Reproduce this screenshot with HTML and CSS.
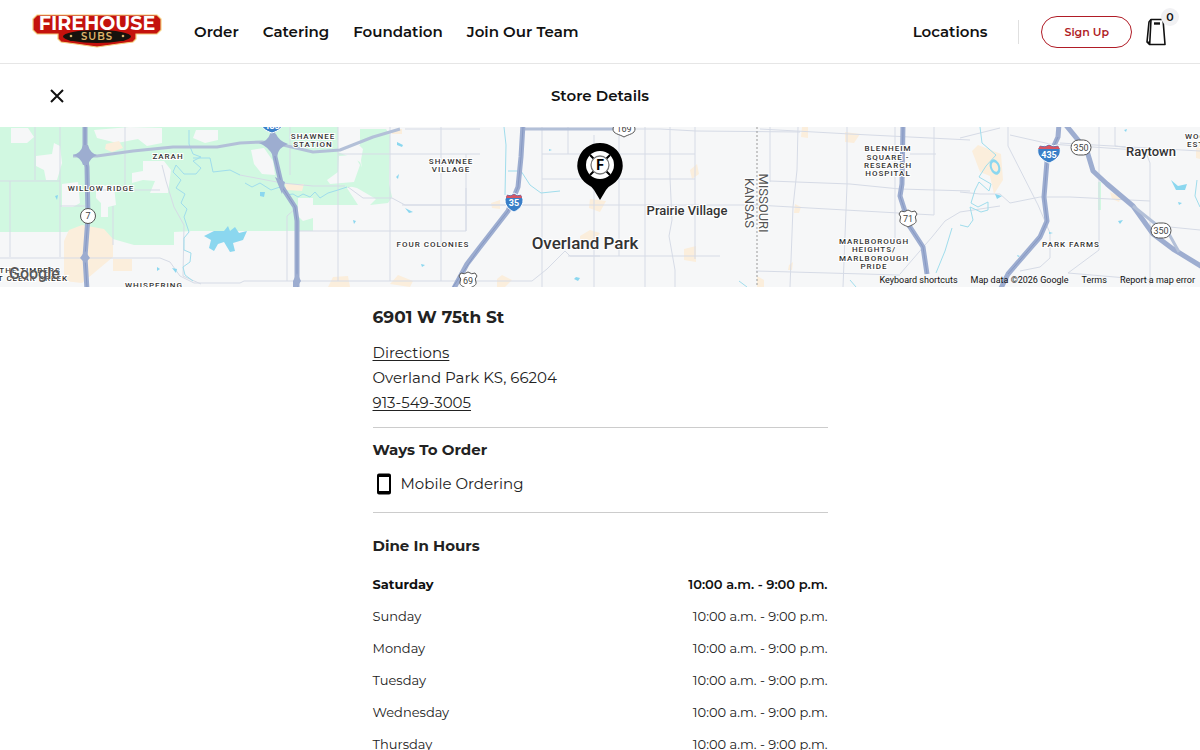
FILE: index.html
```html
<!DOCTYPE html>
<html lang="en">
<head>
<meta charset="utf-8">
<meta name="viewport" content="width=device-width, initial-scale=1">
<title>Store Details | Firehouse Subs</title>
<link rel="stylesheet" href="styles.css">
</head>
<body>
<header class="site-header">
  <a class="logo" href="#" aria-label="Firehouse Subs">
    <svg viewBox="0 0 130 36" width="130" height="36" role="img" aria-hidden="true">
      <path d="M5 1H125L129 5V16L125 20H104V25L101 28L86 30L65 33L44 30L29 28L26 25V20H5L1 16V5Z" fill="#c4120d" stroke="#f3cc7d" stroke-width="1.2"/>
      <ellipse cx="65" cy="22.5" rx="34" ry="6.5" fill="#17120d"/>
      <text class="logo-main" x="65" y="16" text-anchor="middle">FIREHOUSE</text>
      <text class="logo-sub" x="65" y="26" text-anchor="middle">SUBS</text>
      <circle cx="39" cy="22" r="1.3" fill="#e0b66c"/><circle cx="91" cy="22" r="1.3" fill="#e0b66c"/>
    </svg>
  </a>
  <nav class="main-nav" aria-label="Main">
    <a href="#">Order</a><a href="#">Catering</a><a href="#">Foundation</a><a href="#">Join Our Team</a>
  </nav>
  <div class="account">
    <a class="locations" href="#">Locations</a>
    <span class="divider"></span>
    <button class="sign-up" type="button">Sign Up</button>
    <button class="bag" type="button" aria-label="Bag, 0 items">
      <svg viewBox="0 0 20 28" width="20" height="28" fill="none" stroke="#111" stroke-width="1.6" stroke-linejoin="round" aria-hidden="true">
        <path d="M5 1.5H17L19 26.5H3.5L1 24L3 4Z"/><path d="M5 1.5L3.7 26.5M1.2 24L3.7 24.5"/><path d="M8 5.5H14" stroke-width="2.4"/>
      </svg>
      <span class="count">0</span>
    </button>
  </div>
</header>
<main>
  <div class="title-bar">
    <button class="close" type="button" aria-label="Close">
      <svg viewBox="0 0 14 14" width="14" height="14" fill="none" stroke="#111" stroke-width="2" aria-hidden="true"><path d="M1 1L13 13M13 1L1 13"/></svg>
    </button>
    <h1>Store Details</h1>
  </div>
  <section class="map" aria-label="Map">
    <svg class="map-art" viewBox="0 127 1200 160" preserveAspectRatio="xMidYMid slice">
      <rect y="127" width="1200" height="160" fill="#f6f7f8"/>
      <g fill="#d1f8e1">
        <path d="M0 127H338V152L350 157L360 162L363 170L353 186L347 188L358 205H313V231H192L174 232V245H134L113 239L90 228L66 232H0Z"/>
        <path d="M357 129H386L390 135L389 184L392 197L388 203L370 205L376 199L357 188L340 184L354 182L362 170L361 160L363 149L356 142Z"/>
        <path d="M1098 182h3v28h-3z"/>
      </g>
      <g fill="#f6f7f8">
        <path d="M11 128H28L34 137L27 143H11ZM36 156L52 154L54 143L60 146L62 163L57 180H46L44 170L36 166ZM94 130L130 127L162 128V143L147 146L138 139L117 143L97 138ZM196 130H218V140L205 143L193 138ZM143 161H164L171 170L168 193H150L155 181L143 180L132 183L132 173L143 171ZM62 184L78 182L80 203L73 207H62ZM96 185L114 186L116 205L108 207V217H101V203L96 198ZM251 150L264 148L273 161L275 175L262 174L254 164ZM298 198H313V218L303 221L298 216ZM338 127H360V145L338 150ZM339 156L354 155L360 165L354 182L330 184L327 180L338 172Z"/>
      </g>
      <g fill="#fbeedc">
        <path d="M64 257V241L69 230L82 225L104 229L113 239V257L82 283L64 281ZM106 144L119 141L123 148L112 152L105 149ZM113 259H132V271H113ZM285 184L304 184L302 191L286 190ZM328 287L333 277L348 276L350 287ZM390 284L398 275L413 281L410 287ZM491 203L500 200L500 209L492 208ZM590 199L606 201L600 212L589 208ZM580 236L590 230L600 233L594 240L580 240ZM497 279L502 275L512 280L505 287H497ZM690 170L697 164L699 174L692 179ZM684 249L696 246V262L684 260ZM802 127H808L808 138L801 137ZM845 132L860 134L854 143L845 142ZM795 204L801 207L799 213H794ZM789 265L793 262L792 270H788ZM757 276L764 280V287H757ZM972 151L978 145L1001 154L1003 180L994 194L990 176L980 172ZM1110 192L1121 197L1119 202L1112 199ZM1196 148L1200 145V159L1196 158ZM392 130L402 129L402 134L392 134Z"/>
      </g>
      <g class="minor">
        <path d="M10 181V257M0 181H60M35 127V180M60 127V257M60 206H85M0 258H85M88 157V190H160M113 206V245M125 127V190M162 165L166 181L174 207L184 225L183 276L201 284M85 258H160L170 262L180 276L194 283H240L244 281H480"/>
        <path d="M240 175L282 183L313 186H345M290 127V175M338 127V281M390 127V281M441 127V281M466 154V231M297 231H466V188M297 231V207L287 216V281M338 154H480M405 129H480M402 205H540M348 187L363 198H392L405 205H480"/>
        <path d="M525 129H660L696 131L800 132M542 154H695M542 179H695M542 127V287M568 127V154M594 135V287M619 127V256M645 127V287M670 127V178L672 220L669 236L675 270V287M695 127V259M480 205H756M568 256H720M600 256H570L565 251L547 269L532 281H480"/>
        <path d="M760 129L850 134L970 140M770 127V182M798 127L797 170L793 207L790 287M847 127V185L843 287M770 181L850 184L900 189L970 191M756 205L934 215V127M756 271L900 275M895 127V240M910 154H936M960 192L980 194H1000L1010 203L1040 197L1070 197L1150 201M960 138L1000 128M1008 127V146L1038 205L1050 233V258L1040 267L1020 271M1010 135L1050 144L1150 151L1170 153M1060 143L1200 151M1099 127V250L1068 273L1150 280M1115 127V146L1145 150L1150 163V285M1160 226L1200 230M900 274L932 237L945 221L960 212L1000 206"/>
      </g>
      <g class="water">
        <path d="M189 130V144L193 154L201 157L193 161L201 168L196 174H184L176 165L173 172L181 180L176 188L185 194L181 203L187 209L184 217L189 232L184 238V250L191 253L190 262L183 267L185 275L193 281"/>
        <path d="M193 158H210L213 172L230 170L240 175"/>
        <path d="M245 183L252 187L260 183L271 190L280 187L285 195L293 194L298 197L303 194L310 197L315 192L320 198L328 193L338 190L347 187"/>
        <path d="M504 127L506 145L505 195M508 171L521 171L530 185L541 193L560 191"/>
        <path d="M980 127L982 143L996 155L986 166L979 177L991 184L989 191L979 182L975 190L971 203L978 207L988 202L988 210L981 212L970 207L973 220L968 227L960 225M1197 180L1195 196L1200 207M952 228L945 251L936 273M739 281L747 287M850 280L856 287"/>
      </g>
      <g fill="#8bd7ef">
        <path d="M204 236L214 231L224 231L228 226L230 231L235 227L239 233L247 231L243 240L233 243L235 251L230 252L224 242L218 244L214 251L209 248L211 240ZM172 268l5 1-1 4ZM157 267l3 2-3 2ZM55 196l3-1-1 5ZM260 192l5 0-1 5-4-1ZM397 142l6 3-1 2-5-2ZM396 177l3-3-1 5ZM405 208l8 4-4 1ZM353 220l3 1-2 3ZM421 264l4 1-3 2ZM549 149l3 1-3 1ZM576 277l4 1-2 3-4-2ZM1171 180L1178 186L1187 184L1185 190H1176ZM1178 202l4 1-3 2ZM1118 221l5-1-3 4ZM1049 232l4 1-4 1ZM1124 130l3-1-1 3ZM1017 255l3 1-2 1Z"/>
        <ellipse cx="995" cy="167" rx="5" ry="8" transform="rotate(-20 995 167)"/>
        <path d="M995 194l7 2-5 3Z"/>
        <ellipse cx="995" cy="167" rx="3" ry="5" transform="rotate(-20 995 167)" fill="#fbeedc"/>
      </g>
      <g class="road">
        <path d="M73 156H97L133 151L173 147H217L240 143L262 142L283 145L313 152L340 150L373 137L400 129" class="mid"/>
        <path d="M523 129H623" class="mid"/>
        <path d="M85 124V156L87 167L88 217L85 257L87 290"/>
        <path d="M272 124L275 157L282 187L295 207L297 221V290"/>
        <path d="M523 124L521 157L518 187L508 211L480 247L467 264L453 290"/>
        <path d="M903 124L902 184L900 196L910 227L923 247L927 274"/>
        <path d="M1059 124L1058 137L1047 161L1044 197L1047 221L1040 237L1008 274L1000 290"/>
        <path d="M1065 124L1087 151L1093 171L1107 184L1133 206L1153 234L1173 249L1204 268"/>
        <path d="M1133 206L1158 226L1169 234L1179 252" class="mid"/>
      </g>
      <g class="road-line">
        <path d="M85 127V156L87 167L88 217L85 257L87 287M272 127L275 157L282 187L295 207L297 221V287M523 127L521 157L518 187L508 211L480 247L453 287M903 127L902 184L900 196L910 227L923 247L927 274M1058 137L1047 161L1044 197L1047 221L1040 237L1008 274"/>
      </g>
      <g fill="#9dadd0">
        <path d="M73 155Q81 153 83 145H88Q90 153 97 155Q90 158 88 165H83Q81 158 73 155ZM259 143Q268 141 270 134H276Q279 141 288 144Q279 147 277 156H273Q269 147 259 143ZM275 177L285 182L282 194ZM85 251L90 258L85 263L80 258ZM297 273L301 281L297 287H293V281ZM616 127H632L624 135Z"/>
      </g>
      <path d="M757 127V287" stroke="#999" stroke-width="1" stroke-dasharray="2 2"/>
      <g class="labels" text-anchor="middle">
        <text x="168" y="159">ZARAH</text><text x="101" y="191">WILLOW RIDGE</text>
        <text x="313" y="139">SHAWNEE</text><text x="313" y="147">STATION</text>
        <text x="451" y="164">SHAWNEE</text><text x="451" y="172">VILLAGE</text>
        <text x="433" y="247">FOUR COLONIES</text><text x="154" y="288">WHISPERING</text>
        <text x="30" y="273">THE TIMBERS</text><text x="30" y="281">AT CLEAR CREEK</text>
        <text x="888" y="151">BLENHEIM</text><text x="888" y="160">SQUARE -</text><text x="888" y="168">RESEARCH</text><text x="888" y="176">HOSPITAL</text>
        <text x="874" y="244">MARLBOROUGH</text><text x="874" y="252">HEIGHTS/</text><text x="874" y="261">MARLBOROUGH</text><text x="874" y="269">PRIDE</text>
        <text x="1071" y="247">PARK FARMS</text>
      </g>
      <g class="labels"><text x="1185" y="139">WOODS</text><text x="1187" y="147">ESTATES</text></g>
      <g class="places" text-anchor="middle">
        <text class="city" x="585" y="249">Overland Park</text>
        <text x="687" y="215">Prairie Village</text><text x="1151" y="156">Raytown</text>
        <text class="state" transform="translate(759 203) rotate(90)">MISSOURI</text>
        <text class="state" transform="translate(745 203) rotate(90)">KANSAS</text>
      </g>
      <g class="shields" text-anchor="middle">
        <circle cx="88" cy="216" r="7.5"/><text x="88" y="219">7</text>
        <rect x="1071" y="140" width="20" height="15" rx="7.5"/><text x="1081" y="151">350</text>
        <rect x="1151" y="223" width="20" height="15" rx="7.5"/><text x="1161" y="234">350</text>
        <path d="M901 211Q904 213 908 210Q912 213 915 211L917 214Q914 217 916 220C917 224 911 225 908 227C905 225 899 224 900 220Q902 217 899 214Z"/><text x="908" y="222">71</text>
        <path d="M461 273Q464 275 468 272Q472 275 475 273L477 276Q474 279 476 282C477 286 471 287 468 289C465 287 459 286 460 282Q462 279 459 276Z"/><text x="468" y="284">69</text>
        <path d="M614 124H634L635 129C635 134 629 134 624 137C619 134 613 134 613 129Z"/><text x="624" y="132">169</text>
      </g>
      <g class="interstate" text-anchor="middle">
        <path fill="#3a7fc8" stroke="#fff" d="M507 194Q511 196 514 193Q517 196 521 194C526 202 521 209 514 212C507 209 502 202 507 194Z"/><path fill="#d65563" d="M507 195Q511 197 514 194Q517 197 521 195L522 198H506Z"/><text x="514" y="206">35</text>
        <path fill="#3a7fc8" stroke="#fff" d="M1040 145Q1045 147 1049 144Q1053 147 1058 145C1064 153 1057 160 1049 163C1041 160 1034 153 1040 145Z"/><path fill="#d65563" d="M1040 146Q1045 148 1049 145Q1053 148 1058 146L1060 149H1038Z"/><text x="1049" y="158">435</text>
        <path fill="#3a7fc8" stroke="#fff" d="M261 120H283C284 128 278 131 272 133C266 131 260 128 261 120Z"/><text x="272" y="129">435</text>
      </g>
      <g>
        <path d="M600 143A22.5 22.5 0 0 0 587 184Q591 186 594 190L600 200L606 190Q609 186 613 184A22.5 22.5 0 0 0 600 143Z" fill="#000"/>
        <circle cx="600" cy="165" r="14" fill="#fff"/>
        <path d="M590 155L610 175M610 155L590 175" stroke="#000" stroke-width="2"/>
        <circle cx="600" cy="165" r="9" fill="#fff" stroke="#777" stroke-width="1.3"/>
        <text class="pin-letter" x="600" y="170" text-anchor="middle">F</text>
      </g>
    </svg>
    <a class="google" href="#">Google</a>
    <div class="attribution">
      <button type="button">Keyboard shortcuts</button><span>Map data ©2026 Google</span><a href="#">Terms</a><a href="#">Report a map error</a>
    </div>
  </section>
  <article class="store">
    <section class="address">
      <h2>6901 W 75th St</h2>
      <p><a href="#">Directions</a></p>
      <p>Overland Park KS, 66204</p>
      <p><a href="tel:9135493005">913-549-3005</a></p>
    </section>
    <section class="ways">
      <h3>Ways To Order</h3>
      <div class="way">
        <svg viewBox="0 0 14 22" width="14" height="22" aria-hidden="true"><path fill="#000" fill-rule="evenodd" d="M2 .5H12Q14 .5 14 2.5V19.5Q14 21.5 12 21.5H2Q0 21.5 0 19.5V2.5Q0 .5 2 .5ZM2 4V18H12V4Z"/></svg>
        <span>Mobile Ordering</span>
      </div>
    </section>
    <section class="hours">
      <h3 id="hours-title">Dine In Hours</h3>
      <table aria-labelledby="hours-title">
        <tbody>
          <tr class="today"><th scope="row">Saturday</th><td>10:00 a.m. - 9:00 p.m.</td></tr>
          <tr><th scope="row">Sunday</th><td>10:00 a.m. - 9:00 p.m.</td></tr>
          <tr><th scope="row">Monday</th><td>10:00 a.m. - 9:00 p.m.</td></tr>
          <tr><th scope="row">Tuesday</th><td>10:00 a.m. - 9:00 p.m.</td></tr>
          <tr><th scope="row">Wednesday</th><td>10:00 a.m. - 9:00 p.m.</td></tr>
          <tr><th scope="row">Thursday</th><td>10:00 a.m. - 9:00 p.m.</td></tr>
        </tbody>
      </table>
    </section>
  </article>
</main>
</body>
</html>
```
FILE: styles.css
```css
* { box-sizing: border-box; }
body { margin: 0; background: #fff; color: #222; font-family: Montserrat, Inter, sans-serif; font-size: 15px; }
h1, h2, h3, p { margin: 0; }
a { color: inherit; }
button { font: inherit; color: inherit; background: none; border: 0; padding: 0; cursor: pointer; }

.site-header { display: flex; align-items: center; min-height: 64px; padding: 0 21px 0 32px; border-bottom: 1px solid #e6e6e6; color: #111; font-weight: 600; }
.site-header a { text-decoration: none; }
.logo { display: flex; margin-right: 32px; }
.logo-main { font: 700 19px Montserrat, sans-serif; fill: #fff; }
.logo-sub { font: 600 10px Montserrat, sans-serif; fill: #e0b66c; letter-spacing: 1px; }
.main-nav { display: flex; gap: 24px; }
.account { display: flex; align-items: center; margin-left: auto; }
.divider { width: 1px; height: 24px; margin: 0 22px 0 31px; background: #e0e0e0; }
.sign-up { height: 32px; padding: 0 22px; border: 1px solid #b01c26; border-radius: 16px; color: #b01c26; font-size: 11px; }
.bag { position: relative; display: flex; margin-left: 14px; padding-right: 13px; }
.count { position: absolute; top: -10px; right: 0; width: 18px; height: 18px; border-radius: 50%; background: #f1f1f3; font-size: 11px; line-height: 18px; text-align: center; }

.title-bar { display: grid; grid-template-columns: 1fr auto 1fr; align-items: center; min-height: 63px; padding: 0 50px; color: #111; }
.title-bar h1 { font-size: 15px; font-weight: 600; }
.close { display: flex; justify-self: start; }

.map { position: relative; height: 160px; overflow: hidden; }
.map-art { display: block; width: 100%; height: 100%; font-family: Roboto, sans-serif; }
.minor path { fill: none; stroke: #d6dbe6; stroke-width: 1; }
.water path { fill: none; stroke: #a0ddec; stroke-width: 1; }
.road path { fill: none; stroke: #9dadd0; stroke-width: 5; stroke-linejoin: round; }
.road .mid { stroke: #b3c0d8; stroke-width: 3; }
.road-line path { fill: none; stroke: #8799c4; stroke-width: 1; }
.labels { font-size: 8px; font-weight: 500; letter-spacing: 1px; fill: #333; stroke: #fff; stroke-width: 2px; paint-order: stroke; }
.places { font-size: 13px; font-weight: 500; fill: #333; stroke: #fff; stroke-width: 2px; paint-order: stroke; }
.places .city { font-size: 17px; }
.places .state { font-weight: 400; fill: #555; }
.shields { font-size: 9px; fill: #fff; stroke: #555; stroke-width: 1px; }
.shields text { fill: #444; stroke: none; }
.interstate { font-size: 9px; font-weight: 700; }
.interstate text { fill: #fff; }
.pin-letter { font: 700 14px Roboto, sans-serif; fill: #000; }
.google { position: absolute; left: 9px; bottom: 3px; color: #555; font: 500 16px/20px Roboto, sans-serif; text-decoration: none; text-shadow: 0 0 1px #fff; }
.attribution { position: absolute; right: 5px; bottom: 0; display: flex; gap: 13px; color: #111; font: 400 9px/14px Roboto, sans-serif; }
.attribution a { text-decoration: none; }

.store { max-width: 455px; margin: 0 auto; }
.address { padding: 17px 0 12px; border-bottom: 1px solid #ccc; }
.address h2 { margin-bottom: 10px; font-size: 17px; line-height: 26px; font-weight: 700; }
.address p { line-height: 25px; }
.address a { text-underline-offset: 2px; }
.ways { padding: 10px 0 16px; border-bottom: 1px solid #ccc; }
.ways h3, .hours h3 { font-size: 15px; line-height: 24px; font-weight: 700; }
.way { display: flex; align-items: center; gap: 10px; margin-top: 10px; padding-left: 4px; line-height: 24px; }
.hours { padding-top: 21px; }
.hours table { width: 100%; margin-top: 10px; border-collapse: collapse; font-size: 13px; line-height: 20px; }
.hours th, .hours td { padding: 6px 0; font-weight: 400; text-align: left; }
.hours td { text-align: right; }
.hours .today td { color: #111; font-weight: 600; }
.hours .today th { color: #111; font-weight: 700; }
```
